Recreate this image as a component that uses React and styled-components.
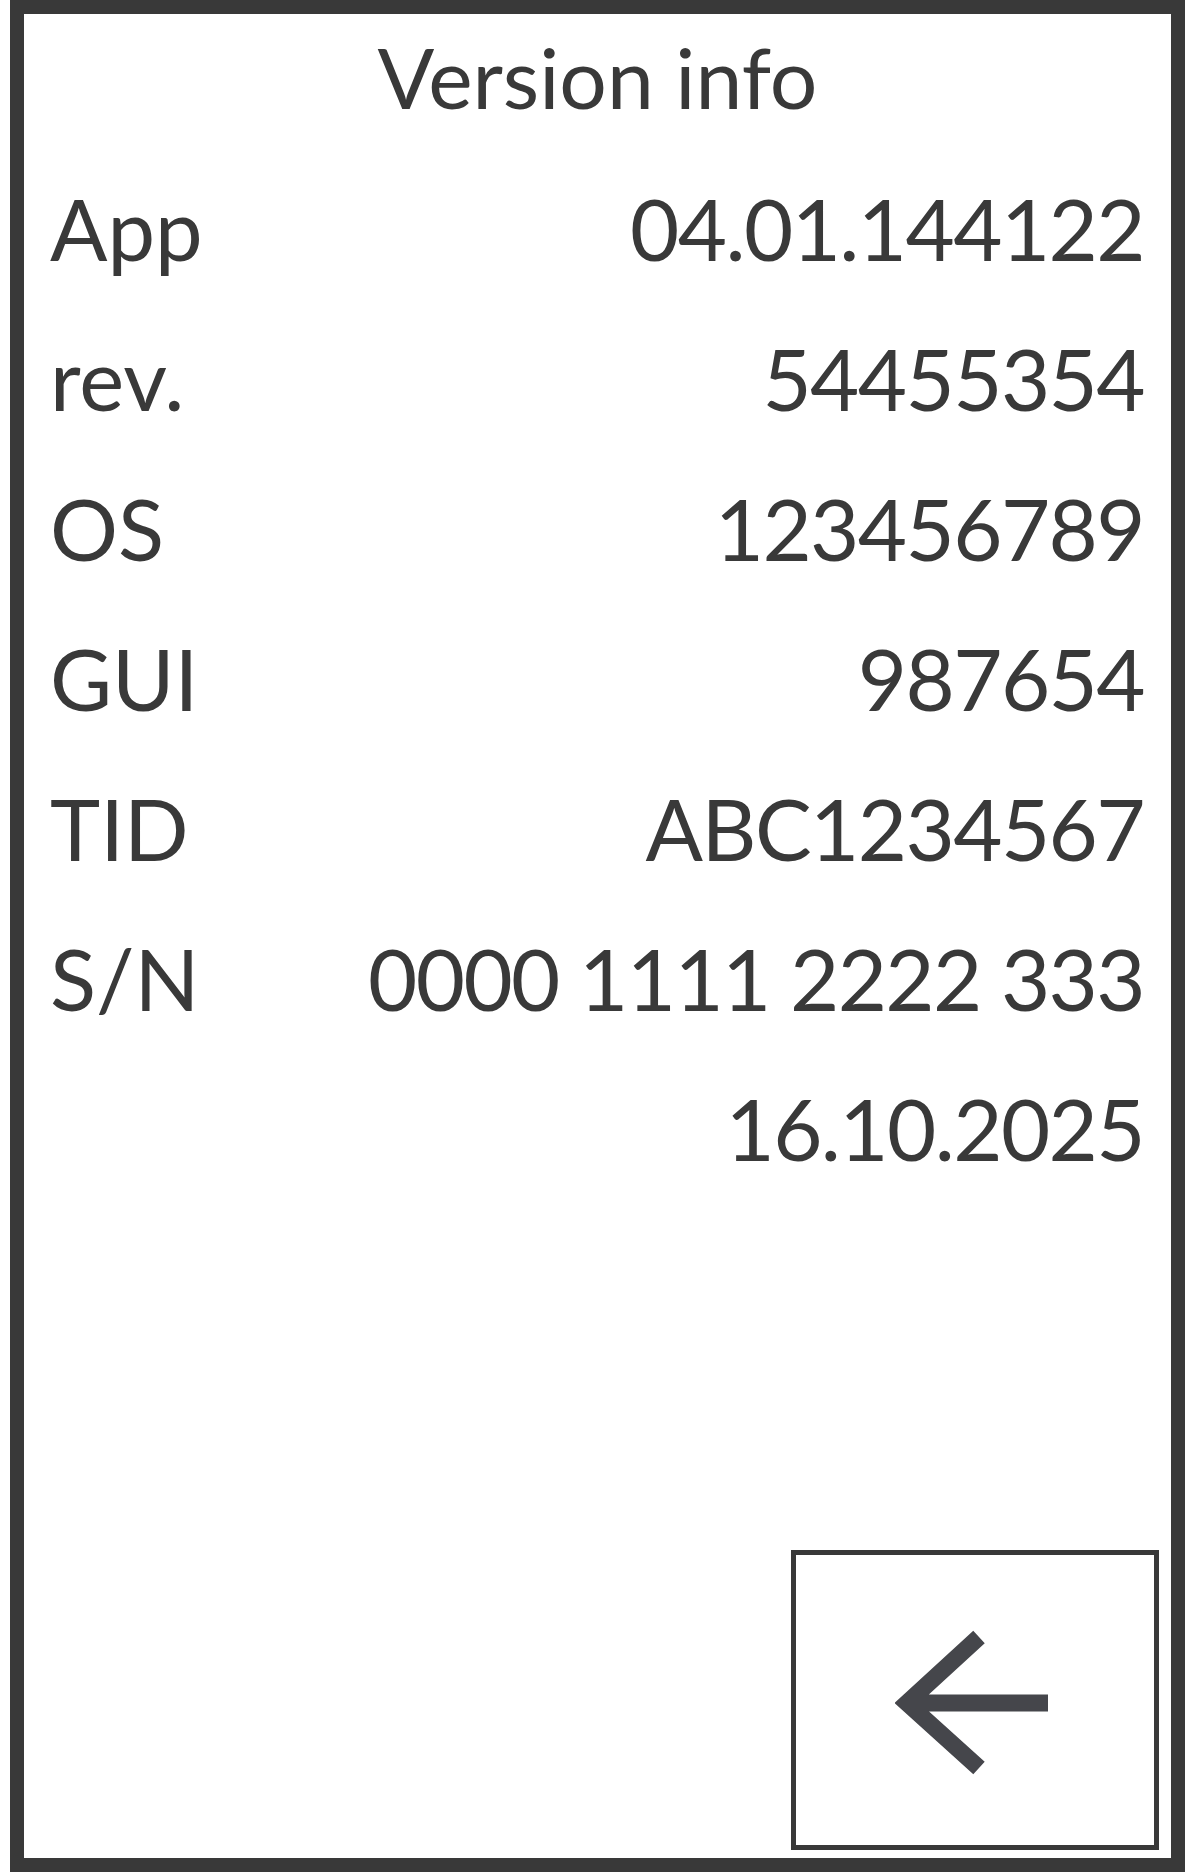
import React from "react";
import styled, { createGlobalStyle } from "styled-components";

const GlobalStyle = createGlobalStyle`
  html, body {
    margin: 0;
    padding: 0;
    background: #ffffff;
  }
  body {
    font-family: Lato, "Noto Sans", sans-serif;
    color: #393939;
  }
`;

const rows = [
  { label: "App", value: "04.01.144122" },
  { label: "rev.", value: "54455354" },
  { label: "OS", value: "123456789" },
  { label: "GUI", value: "987654" },
  { label: "TID", value: "ABC1234567" },
  { label: "S/N", value: "0000 1111 2222 333" },
  { label: "", value: "16.10.2025" },
];

const BackArrow = () => (
  <svg width="160" height="160" viewBox="0 0 160 160" fill="none">
    <path
      d="M84 17 L12 83 L84 148 M12 83 L153 83"
      stroke="#45464b"
      strokeWidth="17"
      strokeLinejoin="miter"
    />
  </svg>
);

const App = () => {
  return (
    <>
      <GlobalStyle />
      <Screen>
        <Title>Version info</Title>
        <InfoList>
          {rows.map((row) => (
            <InfoRow key={row.value}>
              <Label>{row.label}</Label>
              <Value>{row.value}</Value>
            </InfoRow>
          ))}
        </InfoList>
        <Footer>
          <BackButton type="button" aria-label="Back">
            <BackArrow />
          </BackButton>
        </Footer>
      </Screen>
    </>
  );
};

const Screen = styled.div`
  box-sizing: border-box;
  height: 1872px;
  margin: 0 10px;
  border: 14px solid #393939;
  display: flex;
  flex-direction: column;
  background: #ffffff;
`;

const Title = styled.h1`
  margin: 0 0 13px;
  font-size: 84px;
  font-weight: 400;
  line-height: 126px;
  text-align: center;
`;

const InfoList = styled.div`
  display: flex;
  flex-direction: column;
  padding: 0 27px 0 26px;
`;

const InfoRow = styled.div`
  display: flex;
  justify-content: space-between;
  align-items: baseline;
  font-size: 85px;
  line-height: 150px;
`;

const Label = styled.span`
  white-space: nowrap;
`;

const Value = styled.span`
  white-space: nowrap;
  text-align: right;
  letter-spacing: -1.6px;
`;

const Footer = styled.div`
  flex: 1;
  display: flex;
  justify-content: flex-end;
  align-items: flex-end;
  padding: 0 12px 8px 0;
`;

const BackButton = styled.button`
  box-sizing: border-box;
  width: 368px;
  height: 300px;
  border: 5px solid #393939;
  background: #ffffff;
  padding: 0;
  display: flex;
  align-items: center;
  justify-content: center;
  cursor: pointer;
`;

export default App;
